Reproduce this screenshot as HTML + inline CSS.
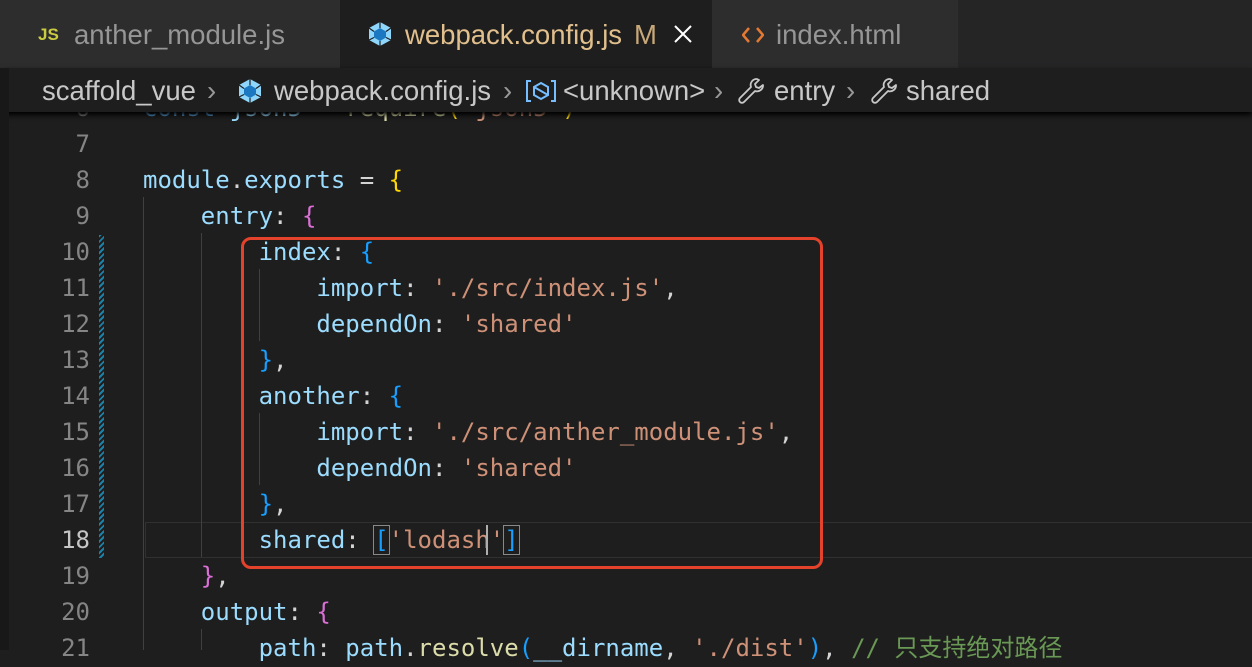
<!DOCTYPE html>
<html><head><meta charset="utf-8"><style>
body{margin:0;width:1252px;height:650px;overflow:hidden;background:#1e1e1e;position:relative;font-family:"Liberation Sans",sans-serif}
.tabs{position:absolute;left:0;top:0;width:1252px;height:68px;background:#252526}
.tab{position:absolute;top:0;height:68px;background:#2d2d2d;font-size:27.5px;color:#969696;line-height:70px}
.bc{position:absolute;left:0;top:68px;width:1252px;height:44px;background:#1e1e1e;box-shadow:0 3px 5px #000;z-index:3;font-size:27.5px;color:#c8c8c8;line-height:46px;white-space:nowrap}
.code{position:absolute;left:0;top:0;width:1252px;height:650px;font-family:"DejaVu Sans Mono","Liberation Mono","Noto Sans CJK SC",monospace;font-size:24px}
.ln{position:absolute;left:20px;width:70px;text-align:right;color:#858585;height:36px;line-height:38px}
.l{position:absolute;left:143px;height:36px;line-height:38px;white-space:pre;color:#d4d4d4}
.k{color:#9cdcfe}.s{color:#ce9178}.y{color:#ffd700}.p{color:#da70d6}.b{color:#179fff}.f{color:#dcdcaa}.c{color:#6a9955}.kw{color:#569cd6}
.g{position:absolute;width:1px;background:#404040}
.ar{position:absolute;color:#999}
</style></head><body>
<div class="tabs">
<div class="tab" style="left:0;width:340px"><span style="position:absolute;left:38px;color:#cbcb41;font-weight:bold;font-size:17px">JS</span><span style="position:absolute;left:74px">anther_module.js</span></div>
<div class="tab" style="left:340px;width:372px;background:#1e1e1e;color:#e2c08d"><svg style="position:absolute;left:28px;top:21px" width="24" height="26" viewBox="0 0 24 26"><path d="M12 1L23 7v12l-11 6L1 19V7z" fill="#8ed6fb"/><path d="M12 7l6 3.5v6L12 20l-6-3.5v-6z" fill="#1c78c0"/><path d="M12 1v6M23 7l-5 3.5M23 19l-5-2.5M12 25v-5M1 19l5-2.5M1 7l5 3.5" stroke="#1e1e1e" stroke-width="1.2"/></svg><span style="position:absolute;left:65px">webpack.config.js</span><span style="position:absolute;left:294px;color:#c8a878">M</span><svg style="position:absolute;left:334px;top:25px" width="18" height="18" viewBox="0 0 18 18"><path d="M1 1L17 17M17 1L1 17" stroke="#fff" stroke-width="2"/></svg></div>
<div class="tab" style="left:712px;width:246px"><svg style="position:absolute;left:30px;top:26px" width="22" height="18" viewBox="0 0 22 18"><path d="M7 2L1 9l6 7M15 2l6 7-6 7" stroke="#e37933" stroke-width="2.5" fill="none"/></svg><span style="position:absolute;left:64px">index.html</span></div>
</div>
<div class="bc">
<span style="position:absolute;left:42px">scaffold_vue</span>
<span class="ar" style="left:207px">›</span>
<svg style="position:absolute;left:238px;top:10px" width="24" height="26" viewBox="0 0 24 26"><path d="M12 1L23 7v12l-11 6L1 19V7z" fill="#8ed6fb"/><path d="M12 7l6 3.5v6L12 20l-6-3.5v-6z" fill="#1c78c0"/><path d="M12 1v6M23 7l-5 3.5M23 19l-5-2.5M12 25v-5M1 19l5-2.5M1 7l5 3.5" stroke="#1e1e1e" stroke-width="1.2"/></svg>
<span style="position:absolute;left:274px">webpack.config.js</span>
<span class="ar" style="left:503px">›</span>
<svg style="position:absolute;left:526px;top:12px" width="30" height="22" viewBox="0 0 30 22"><path d="M5 1H1v20h4M25 1h4v20h-4" stroke="#75beff" stroke-width="2" fill="none"/><path d="M15 3l7 4v8l-7 4-7-4V7zM8 7l14 8" stroke="#75beff" stroke-width="2" fill="none"/></svg>
<span style="position:absolute;left:563px">&lt;unknown&gt;</span>
<span class="ar" style="left:714px">›</span>
<svg style="position:absolute;left:737px;top:9px" width="28" height="28" viewBox="0 0 28 28"><path d="M20 2a6 6 0 0 0-6 8L3 21a2.5 2.5 0 0 0 4 4l11-11a6 6 0 0 0 8-6l-4 3-3-1-1-3 4-4z" stroke="#c8c8c8" stroke-width="1.8" fill="none" stroke-linejoin="round"/></svg>
<span style="position:absolute;left:774px">entry</span>
<span class="ar" style="left:846px">›</span>
<svg style="position:absolute;left:870px;top:9px" width="28" height="28" viewBox="0 0 28 28"><path d="M20 2a6 6 0 0 0-6 8L3 21a2.5 2.5 0 0 0 4 4l11-11a6 6 0 0 0 8-6l-4 3-3-1-1-3 4-4z" stroke="#c8c8c8" stroke-width="1.8" fill="none" stroke-linejoin="round"/></svg>
<span style="position:absolute;left:906px">shared</span>
</div>
<div style="position:absolute;left:0;top:68px;width:9px;height:582px;background:#181818;z-index:4"></div>
<div class="code">
<div style="position:absolute;left:145px;top:522px;width:1107px;height:34px;border:1px solid #303030;border-right:none"></div>
<div style="position:absolute;left:99px;top:235px;width:5px;height:323px;background:repeating-linear-gradient(135deg,#1b81a8 0 2px,transparent 2px 4px)"></div>
<div class="g" style="left:143px;top:197px;height:453px"></div>
<div class="g" style="left:201px;top:233px;height:324px"></div>
<div class="g" style="left:201px;top:629px;height:21px"></div>
<div class="g" style="left:259px;top:269px;height:72px"></div>
<div class="g" style="left:259px;top:413px;height:72px"></div>
<div class="ln" style="top:89px">6</div><div class="l" style="top:89px"><span class="kw">const</span> <span class="k">json5</span> = <span class="f">require</span><span class="y">(</span><span class="s">'json5'</span><span class="y">)</span></div>
<div class="ln" style="top:125px">7</div>
<div class="ln" style="top:161px">8</div><div class="l" style="top:161px"><span class="k">module</span>.<span class="k">exports</span> = <span class="y">{</span></div>
<div class="ln" style="top:197px">9</div><div class="l" style="top:197px">    <span class="k">entry</span>: <span class="p">{</span></div>
<div class="ln" style="top:233px">10</div><div class="l" style="top:233px">        <span class="k">index</span>: <span class="b">{</span></div>
<div class="ln" style="top:269px">11</div><div class="l" style="top:269px">            <span class="k">import</span>: <span class="s">'./src/index.js'</span>,</div>
<div class="ln" style="top:305px">12</div><div class="l" style="top:305px">            <span class="k">dependOn</span>: <span class="s">'shared'</span></div>
<div class="ln" style="top:341px">13</div><div class="l" style="top:341px">        <span class="b">}</span>,</div>
<div class="ln" style="top:377px">14</div><div class="l" style="top:377px">        <span class="k">another</span>: <span class="b">{</span></div>
<div class="ln" style="top:413px">15</div><div class="l" style="top:413px">            <span class="k">import</span>: <span class="s">'./src/anther_module.js'</span>,</div>
<div class="ln" style="top:449px">16</div><div class="l" style="top:449px">            <span class="k">dependOn</span>: <span class="s">'shared'</span></div>
<div class="ln" style="top:485px">17</div><div class="l" style="top:485px">        <span class="b">}</span>,</div>
<div class="ln" style="top:521px;color:#c6c6c6">18</div><div class="l" style="top:521px">        <span class="k">shared</span>: <span class="b" style="outline:1px solid #888">[</span><span class="s">'lodash'</span><span class="b" style="outline:1px solid #888">]</span></div>
<div style="position:absolute;left:486px;top:525px;width:2px;height:30px;background:#aeafad"></div>
<div class="ln" style="top:557px">19</div><div class="l" style="top:557px">    <span class="p">}</span>,</div>
<div class="ln" style="top:593px">20</div><div class="l" style="top:593px">    <span class="k">output</span>: <span class="p">{</span></div>
<div class="ln" style="top:629px">21</div><div class="l" style="top:629px">        <span class="k">path</span>: <span class="k">path</span>.<span class="f">resolve</span><span class="b">(</span><span class="k">__dirname</span>, <span class="s">'./dist'</span><span class="b">)</span>, <span class="c">// 只支持绝对路径</span></div>
<div style="position:absolute;left:241px;top:237px;width:576px;height:326px;border:3px solid #e5422c;border-radius:10px"></div>
</div>
</body></html>
